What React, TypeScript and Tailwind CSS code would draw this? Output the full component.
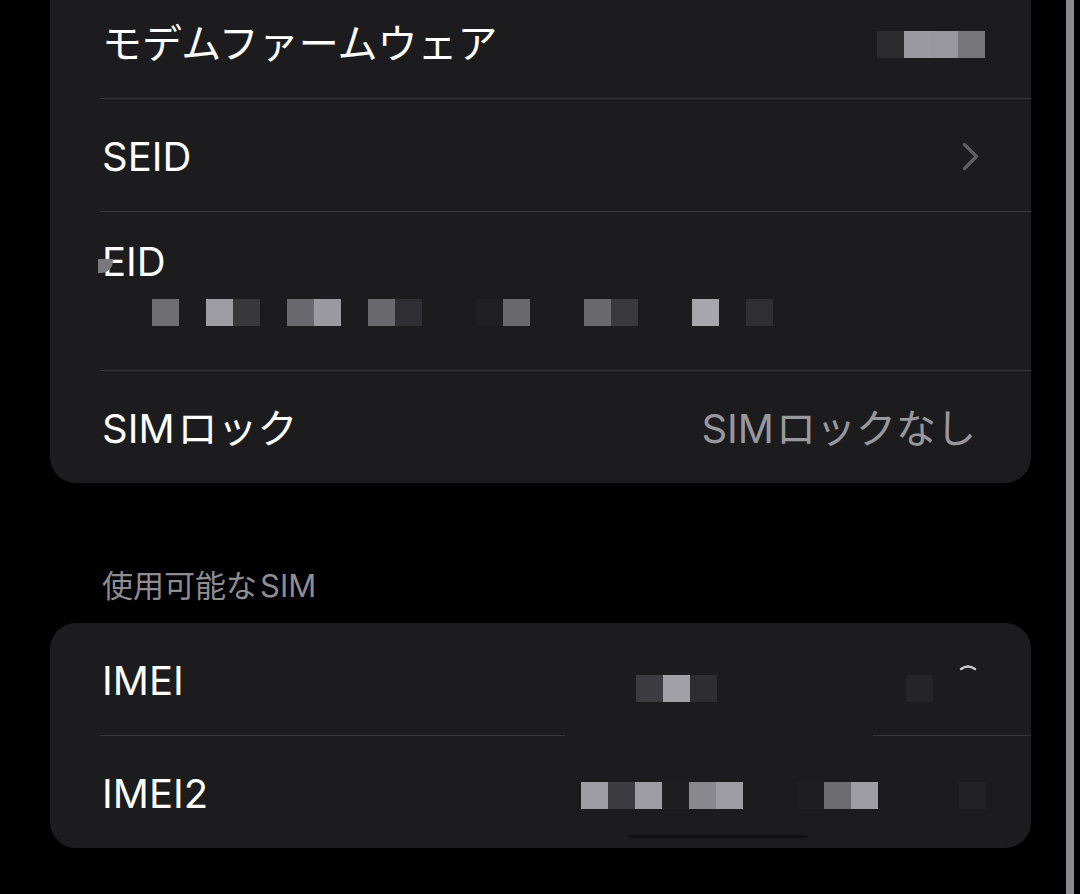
import React from "react";

type Cell = string | null;

// mosaic patches laid over censored values (27px cells)
function Mosaic({ cells, className }: { cells: Cell[]; className: string }) {
  return (
    <div className={`absolute flex ${className}`}>
      {cells.map((c, i) => (
        <div
          key={i}
          className="h-[27px] w-[27px] shrink-0"
          style={c ? { backgroundColor: c } : undefined}
        />
      ))}
    </div>
  );
}

function Chevron() {
  return (
    <svg width="17" height="29" viewBox="0 0 17 29" fill="none">
      <polyline
        points="2.5,2.5 14.5,14.5 2.5,26.5"
        stroke="#5f5f64"
        strokeWidth="3.2"
        strokeLinecap="round"
        strokeLinejoin="round"
      />
    </svg>
  );
}

function Separator() {
  return <div className="ml-[50px] h-px bg-[#38383a]" />;
}

function Row({
  label,
  children,
  extra,
}: {
  label: React.ReactNode;
  children?: React.ReactNode;
  extra?: React.ReactNode;
}) {
  return (
    <div className="relative flex h-[112px] items-center justify-between pl-[52px]">
      <span className="pt-[3px] text-[40px] leading-[48px] text-white">{label}</span>
      {children}
      {extra}
    </div>
  );
}

export default function App() {
  return (
    <div className="flex h-[894px] overflow-hidden bg-black font-['Inter','Noto_Sans_CJK_JP',sans-serif]">
      <div className="w-[50px] shrink-0" />

      <div className="-mt-[14px] w-[981px] shrink-0">
        {/* device info card */}
        <div className="rounded-b-[26px] bg-[#1c1c1e]">
          <Row
            label="モデムファームウェア"
            extra={
              <Mosaic
                className="left-[827px] top-[45px]"
                cells={["#2c2c2f", "#9a9aa0", "#97979d", "#77777b"]}
              />
            }
          />
          <Separator />
          <Row label="SEID">
            <div className="mr-[52px] flex items-center pt-[3px]">
              <Chevron />
            </div>
          </Row>
          <Separator />
          <div className="relative h-[158px] pl-[52px] pt-[26px]">
            <span className="block text-[40px] leading-[48px] text-white">EID</span>
            <div className="absolute left-[48px] top-[47px] h-[14px] w-[15px] rounded-br-[12px] bg-[#7a7a7e]" />
            <Mosaic
              className="left-[102px] top-[87px]"
              cells={[
                "#6e6e72", null, "#9c9ca2", "#38383b", null, "#6a6a6e", "#9a9aa0", null,
                "#6a6a6e", "#2f2f33", null, null, "#202023", "#6a6a6e", null, null,
                "#6a6a6e", "#3a3a3d", null, null, "#a6a6ac", null, "#2f2f31",
              ]}
            />
          </div>
          <Separator />
          <Row
            label={
              <>
                SIM<span className="ml-[3px]">ロック</span>
              </>
            }
          >
            <span className="mr-[55px] pt-[3px] text-[40px] leading-[48px] text-[#98989e]">
              SIM<span className="ml-[2px]">ロックなし</span>
            </span>
          </Row>
        </div>

        <div className="pl-[52px] pt-[83px] pb-[17px] text-[31px] leading-[40px] text-[#8d8d93]">
          使用可能な<span className="ml-[3px]">SIM</span>
        </div>

        {/* SIM card */}
        <div className="relative rounded-[26px] bg-[#1c1c1e]">
          <Row
            label="IMEI"
            extra={
              <>
                <Mosaic
                  className="left-[586px] top-[52px]"
                  cells={["#3c3c40", "#a0a0a6", "#2e2e31", null, null, null, null, null, null, null, "#252528"]}
                />
                <svg className="absolute left-[909px] top-[40px]" width="18" height="8" viewBox="0 0 18 8">
                  <path d="M2 6 Q9 1 16 6" stroke="#c8c8cc" strokeWidth="2.5" fill="none" strokeLinecap="round" />
                </svg>
              </>
            }
          />
          <div className="relative">
            <Separator />
            <div className="absolute left-[515px] top-0 h-px w-[308px] bg-[#1c1c1e]" />
          </div>
          <Row
            label="IMEI2"
            extra={
              <>
                <Mosaic
                  className="left-[531px] top-[46px]"
                  cells={[
                    "#9d9da3", "#3c3c40", "#9d9da3", "#1f1f22", "#88888d", "#9d9da3", null, null,
                    "#1f1f22", "#6b6b70", "#9d9da3", null, null, null, "#222225",
                  ]}
                />
                <div className="absolute left-[578px] top-[99px] h-[3px] w-[180px] rounded-full bg-[#111113]" />
              </>
            }
          />
        </div>
      </div>

      <div className="w-[35px] shrink-0" />
      <div className="w-[8px] shrink-0 bg-[#8b8b8f]" />
    </div>
  );
}
